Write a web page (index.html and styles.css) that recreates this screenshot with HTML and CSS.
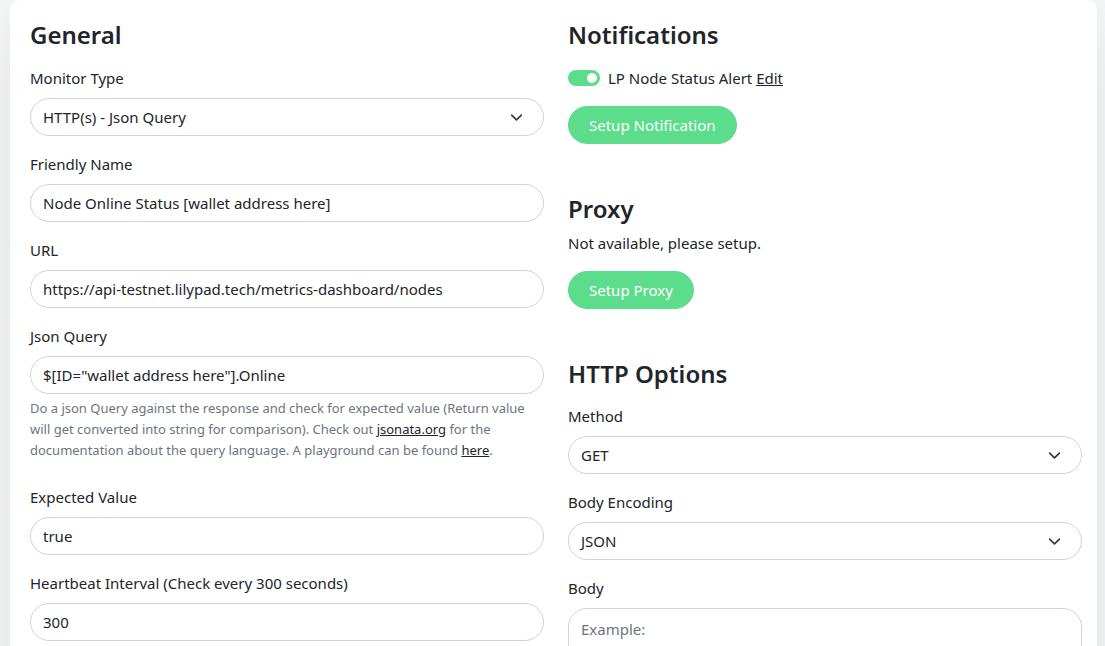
FILE: index.html
```html
<!DOCTYPE html>
<html lang="en">
<head>
<meta charset="utf-8">
<title>Edit Monitor</title>
<link rel="stylesheet" href="styles.css">
</head>
<body>
<div class="page">
  <div class="card">
    <div class="col">
      <h2 class="heading">General</h2>
      <div class="field">
        <label class="label">Monitor Type</label>
        <div class="control select"><span>HTTP(s) - Json Query</span>
          <svg class="chev" viewBox="0 0 16 16" width="16" height="16"><path d="M2 5l6 6 6-6" fill="none" stroke="#343a40" stroke-width="2" stroke-linecap="round" stroke-linejoin="round"/></svg>
        </div>
      </div>
      <div class="field">
        <label class="label">Friendly Name</label>
        <div class="control">Node Online Status [wallet address here]</div>
      </div>
      <div class="field">
        <label class="label">URL</label>
        <div class="control">https://api-testnet.lilypad.tech/metrics-dashboard/nodes</div>
      </div>
      <div class="field field-help">
        <label class="label">Json Query</label>
        <div class="control">$[ID="wallet address here"].Online</div>
        <div class="help">Do a json Query against the response and check for expected value (Return value will get converted into string for comparison). Check out <a href="#">jsonata.org</a> for the documentation about the query language. A playground can be found <a href="#">here</a>.</div>
      </div>
      <div class="field">
        <label class="label">Expected Value</label>
        <div class="control">true</div>
      </div>
      <div class="field">
        <label class="label">Heartbeat Interval (Check every 300 seconds)</label>
        <div class="control">300</div>
      </div>
    </div>
    <div class="col">
      <h2 class="heading">Notifications</h2>
      <div class="notif-row">
        <span class="switch"><span class="knob"></span></span>
        <span>LP Node Status Alert <a href="#">Edit</a></span>
      </div>
      <button class="btn">Setup Notification</button>

      <h2 class="heading section">Proxy</h2>
      <p class="text">Not available, please setup.</p>
      <button class="btn">Setup Proxy</button>

      <h2 class="heading section2">HTTP Options</h2>
      <div class="field">
        <label class="label">Method</label>
        <div class="control select"><span>GET</span>
          <svg class="chev" viewBox="0 0 16 16" width="16" height="16"><path d="M2 5l6 6 6-6" fill="none" stroke="#343a40" stroke-width="2" stroke-linecap="round" stroke-linejoin="round"/></svg>
        </div>
      </div>
      <div class="field">
        <label class="label">Body Encoding</label>
        <div class="control select"><span>JSON</span>
          <svg class="chev" viewBox="0 0 16 16" width="16" height="16"><path d="M2 5l6 6 6-6" fill="none" stroke="#343a40" stroke-width="2" stroke-linecap="round" stroke-linejoin="round"/></svg>
        </div>
      </div>
      <div class="field">
        <label class="label">Body</label>
        <div class="control textarea"><span class="placeholder">Example:</span></div>
      </div>
    </div>
  </div>
</div>
</body>
</html>
```
FILE: styles.css
```css
* { box-sizing: border-box; }
html, body { margin: 0; padding: 0; }
body {
  background: #f7f8fa;
  font-family: "Noto Sans", "Open Sans", sans-serif;
  color: #212529;
  font-size: 15px;
  line-height: 1.6;
  height: 646px;
  overflow: hidden;
}
.page { padding: 0 8px 0 10px; }
.card {
  background: #fff;
  border-radius: 10px;
  box-shadow: 0 15px 70px rgba(0,0,0,0.1);
  padding: 20px 15px 20px 20px;
  display: grid;
  grid-template-columns: 514px 514px;
  column-gap: 24px;
  min-height: 700px;
}
.col { display: flex; flex-direction: column; align-items: flex-start; }
.heading {
  margin: 0 0 17px;
  font-size: 24px;
  line-height: 29px;
  font-weight: 600;
}
.field { width: 100%; margin-bottom: 16px; }
.label { display: block; margin-bottom: 8px; line-height: 24px; }
.control {
  width: 100%;
  height: 38px;
  border: 1px solid #ced4da;
  border-radius: 19px;
  padding: 6px 12px;
  line-height: 24px;
  display: flex;
  align-items: center;
  justify-content: space-between;
  white-space: nowrap;
  overflow: hidden;
}
.chev { width: 13px; height: 13px; margin-right: 8px; }
.textarea { height: 80px; align-items: flex-start; border-radius: 19px; padding-top: 8px; }
.placeholder { color: #6c757d; }
.help {
  margin-top: 4px;
  font-size: 13px;
  line-height: 21px;
  color: #6c757d;
}
.help a, .notif-row a { color: #212529; }
.field-help { margin-bottom: 24px; }
.notif-row { display: flex; align-items: center; gap: 8px; line-height: 24px; margin-bottom: 16px; }
.switch {
  width: 32px; height: 16px; border-radius: 8px; background: #5cdd8b;
  display: flex; align-items: center; justify-content: flex-end; padding-right: 3px;
}
.knob { width: 10px; height: 10px; border-radius: 50%; background: #fff; }
.btn {
  font-family: inherit;
  font-size: 15px;
  line-height: 24px;
  color: #fff;
  background: #5cdd8b;
  border: 1px solid #5cdd8b;
  border-radius: 19px;
  padding: 6px 20px;
  height: 38px;
}
.section { margin-top: 50px; margin-bottom: 8px; }
.text { margin: 0 0 16px; line-height: 24px; }
.section2 { margin-top: 50px; margin-bottom: 16px; }
```
